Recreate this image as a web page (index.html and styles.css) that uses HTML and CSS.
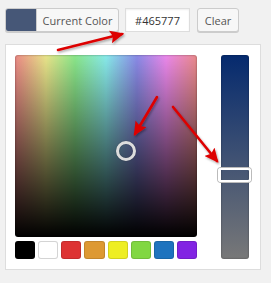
FILE: index.html
```html
<!DOCTYPE html>
<html lang="en">
<head>
    <meta charset="UTF-8">
    <title>Color Picker</title>
    <link rel="stylesheet" href="styles.css">
</head>
<body>

<div class="picker-wrap">

    <!-- Toolbar -->
    <div class="toolbar">
        <button class="current-btn">
            <span class="current-swatch"></span>
            <span class="current-label">Current Color</span>
        </button>
        <input class="hex-input" type="text" value="#465777">
        <button class="clear-btn">Clear</button>
    </div>

    <!-- Picker Panel -->
    <div class="panel">
        <div class="left-col">
            <div class="square">
                <span class="square-handle"></span>
            </div>
            <div class="palette">
                <span class="pal" style="background:#000000"></span>
                <span class="pal pal-white" style="background:#ffffff"></span>
                <span class="pal" style="background:#dd3333"></span>
                <span class="pal" style="background:#dd9933"></span>
                <span class="pal" style="background:#eeee22"></span>
                <span class="pal" style="background:#81d742"></span>
                <span class="pal" style="background:#1e73be"></span>
                <span class="pal" style="background:#8224e3"></span>
            </div>
        </div>
        <div class="slider">
            <span class="slider-handle"></span>
        </div>
    </div>

    <!-- Annotation arrows -->
    <svg class="arrows" width="271" height="283" viewBox="0 0 271 283">
        <defs>
            <marker id="head" markerWidth="5.5" markerHeight="5" refX="4.6" refY="2.5" orient="auto" markerUnits="strokeWidth">
                <path d="M0,0 L5.5,2.5 L0,5 L1,2.5 Z" fill="#dd0000"/>
            </marker>
            <filter id="sh" x="-20%" y="-20%" width="140%" height="140%">
                <feDropShadow dx="1" dy="1.5" stdDeviation="0.8" flood-color="#000" flood-opacity="0.35"/>
            </filter>
        </defs>
        <g filter="url(#sh)" stroke="#dd0000" stroke-width="2.6" fill="none" stroke-linecap="round">
            <line x1="58" y1="50" x2="122" y2="34" marker-end="url(#head)"/>
            <line x1="157" y1="97" x2="135" y2="134" marker-end="url(#head)"/>
            <line x1="173" y1="107" x2="217" y2="161" marker-end="url(#head)"/>
        </g>
    </svg>

</div>

</body>
</html>
```

FILE: styles.css
```css
body {
    margin: 0;
    background-color: #f1f1f1;
    font-family: "Open Sans", Arial, sans-serif;
    font-size: 11px;
    color: #555;
}
.picker-wrap {
    position: relative;
    width: 271px;
    height: 283px;
    padding: 8px 0 0 5px;
    box-sizing: border-box;
}
.toolbar {
    display: flex;
    align-items: center;
    height: 24px;
}
button {
    font-family: inherit;
    font-size: 11px;
    color: #555;
    background-color: #f7f7f7;
    border: 1px solid #cccccc;
    border-radius: 3px;
    box-shadow: 0 1px 0 #cccccc;
    cursor: pointer;
    height: 24px;
    padding: 0;
}
.current-btn {
    display: flex;
    align-items: stretch;
    width: 114px;
    overflow: hidden;
}
.current-swatch {
    width: 30px;
    background-color: #465777;
    border-right: 1px solid #cccccc;
}
.current-label {
    flex: 1;
    display: flex;
    align-items: center;
    justify-content: center;
}
.hex-input {
    margin-left: 6px;
    width: 65px;
    height: 24px;
    box-sizing: border-box;
    border: 1px solid #dddddd;
    background-color: #fff;
    font-family: inherit;
    font-size: 11px;
    color: #333;
    text-align: center;
    padding: 0;
    box-shadow: inset 0 1px 2px rgba(0, 0, 0, 0.07);
}
.clear-btn {
    margin-left: 7px;
    width: 42px;
}
.panel {
    margin-top: 12px;
    width: 256px;
    height: 226px;
    box-sizing: border-box;
    background-color: #fff;
    border: 1px solid #dddddd;
    padding: 10px 11px 0 9px;
    display: flex;
    justify-content: space-between;
}
.left-col {
    width: 182px;
    display: flex;
    flex-direction: column;
    gap: 4px;
}
.square {
    position: relative;
    width: 182px;
    height: 182px;
    border-radius: 3px;
    background:
        linear-gradient(to bottom, rgba(0, 0, 0, 0), #000000),
        linear-gradient(to right, #ec8a86 0%, #e8e48a 17%, #8ae68a 33%, #88eaea 50%, #8a8ae6 67%, #ea88ea 83%, #ea8a8a 100%);
    box-shadow: inset 0 0 2px rgba(0, 0, 0, 0.5);
}
.square-handle {
    position: absolute;
    left: 101px;
    top: 86px;
    width: 14px;
    height: 14px;
    border: 3px solid #dddddd;
    border-radius: 50%;
    box-shadow: 0 0 1px rgba(0, 0, 0, 0.5), inset 0 0 1px rgba(0, 0, 0, 0.5);
}
.palette {
    display: grid;
    grid-template-columns: repeat(8, 1fr);
    gap: 3px;
    height: 18px;
}
.pal {
    border-radius: 3px;
    box-shadow: inset 0 0 0 1px rgba(0, 0, 0, 0.12);
}
.pal-white {
    box-shadow: inset 0 0 0 1px #d4d4d4;
}
.slider {
    position: relative;
    width: 28px;
    height: 204px;
    border-radius: 3px;
    background: linear-gradient(to bottom, #052a6e, #787878);
    box-shadow: inset 0 0 2px rgba(0, 0, 0, 0.4);
}
.slider-handle {
    position: absolute;
    left: -3px;
    top: 113px;
    width: 29px;
    height: 10px;
    border: 2px solid #fff;
    border-radius: 3px;
    box-shadow: 0 0 0 1px #bbbbbb;
}
.arrows {
    position: absolute;
    left: 0;
    top: 0;
    pointer-events: none;
}
```
